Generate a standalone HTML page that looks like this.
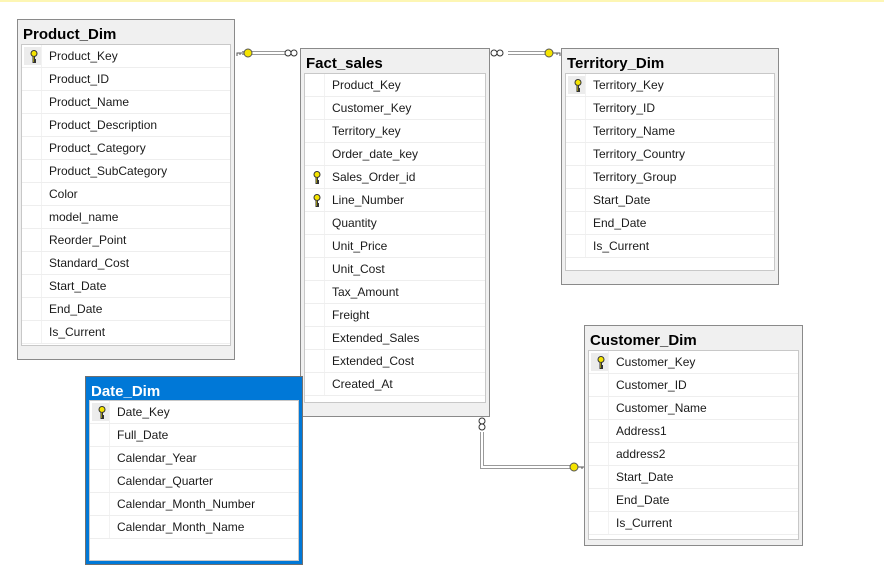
<!DOCTYPE html>
<html><head><meta charset="utf-8"><style>
body{margin:0;width:884px;height:573px;background:#fff;position:relative;overflow:hidden;font-family:"Liberation Sans",sans-serif}
.top{position:absolute;left:0;top:0;width:884px;height:2px;background:#fdf6b4}
.t{position:absolute;background:#f0f0f0;border:1px solid #8a8a8a;box-sizing:border-box}
.t h{position:absolute;left:5px;top:6px;font-size:15px;font-weight:bold;color:#000}
.in{position:absolute;left:3px;right:3px;background:#fff;border:1px solid #c8c8c8;box-sizing:border-box}
.r{height:23px;border-bottom:1px solid #eeeeee;box-sizing:border-box;position:relative;font-size:12px;line-height:22px;color:#1a1a1a}
.r span{position:absolute;left:27px}
.r:before{content:"";position:absolute;left:19px;top:0;bottom:0;border-left:1px solid #f2f2f2}
.k{position:absolute;left:2px;top:2px;width:17px;height:18px;background:#ececec}
.blue{background:#0078d7;border:1px solid #707070}
.blue h{color:#fff}
</style></head><body>
<div class="top"></div>
<svg width="884" height="573" style="position:absolute;left:0;top:0">
<defs><g id="key"><circle cx="0" cy="0" r="4" fill="#f5e400" stroke="#555" stroke-width="1"/><path d="M4 0h7v3M8 0v2" stroke="#555" fill="none"/></g></defs>
<g stroke="#9a9a9a" stroke-width="4" fill="none"><path d="M242 53H286"/><path d="M508 53H552"/><path d="M482 432V467H572"/></g>
<g stroke="#fff" stroke-width="2" fill="none"><path d="M242 53H286"/><path d="M508 53H552"/><path d="M482 432V467H572"/></g>
<g fill="#fff" stroke="#333"><circle cx="288" cy="53" r="3"/><circle cx="294" cy="53" r="3"/><circle cx="494" cy="53" r="3"/><circle cx="500" cy="53" r="3"/><circle cx="482" cy="421" r="3"/><circle cx="482" cy="427" r="3"/></g>
<use href="#key" transform="translate(248,53) scale(-1,1)"/>
<use href="#key" transform="translate(549,53)"/>
<use href="#key" transform="translate(574,467)"/>
</svg>

<div class="t" style="left:17px;top:19px;width:218px;height:341px"><h>Product_Dim</h>
<div class="in" style="top:24px;height:302px">
<div class="r"><div class="k"></div><span>Product_Key</span></div><div class="r"><span>Product_ID</span></div><div class="r"><span>Product_Name</span></div><div class="r"><span>Product_Description</span></div><div class="r"><span>Product_Category</span></div><div class="r"><span>Product_SubCategory</span></div><div class="r"><span>Color</span></div><div class="r"><span>model_name</span></div><div class="r"><span>Reorder_Point</span></div><div class="r"><span>Standard_Cost</span></div><div class="r"><span>Start_Date</span></div><div class="r"><span>End_Date</span></div><div class="r"><span>Is_Current</span></div>
</div></div>

<div class="t" style="left:300px;top:48px;width:190px;height:369px"><h>Fact_sales</h>
<div class="in" style="top:24px;height:330px">
<div class="r"><span>Product_Key</span></div><div class="r"><span>Customer_Key</span></div><div class="r"><span>Territory_key</span></div><div class="r"><span>Order_date_key</span></div><div class="r"><span>Sales_Order_id</span></div><div class="r"><span>Line_Number</span></div><div class="r"><span>Quantity</span></div><div class="r"><span>Unit_Price</span></div><div class="r"><span>Unit_Cost</span></div><div class="r"><span>Tax_Amount</span></div><div class="r"><span>Freight</span></div><div class="r"><span>Extended_Sales</span></div><div class="r"><span>Extended_Cost</span></div><div class="r"><span>Created_At</span></div>
</div></div>

<div class="t" style="left:561px;top:48px;width:218px;height:237px"><h>Territory_Dim</h>
<div class="in" style="top:24px;height:198px">
<div class="r"><div class="k"></div><span>Territory_Key</span></div><div class="r"><span>Territory_ID</span></div><div class="r"><span>Territory_Name</span></div><div class="r"><span>Territory_Country</span></div><div class="r"><span>Territory_Group</span></div><div class="r"><span>Start_Date</span></div><div class="r"><span>End_Date</span></div><div class="r"><span>Is_Current</span></div>
</div></div>

<div class="t" style="left:584px;top:325px;width:219px;height:221px"><h>Customer_Dim</h>
<div class="in" style="top:24px;height:190px">
<div class="r"><div class="k"></div><span>Customer_Key</span></div><div class="r"><span>Customer_ID</span></div><div class="r"><span>Customer_Name</span></div><div class="r"><span>Address1</span></div><div class="r"><span>address2</span></div><div class="r"><span>Start_Date</span></div><div class="r"><span>End_Date</span></div><div class="r"><span>Is_Current</span></div>
</div></div>

<div class="t blue" style="left:85px;top:376px;width:218px;height:189px"><h>Date_Dim</h>
<div class="in" style="top:23px;height:161px">
<div class="r"><div class="k"></div><span>Date_Key</span></div><div class="r"><span>Full_Date</span></div><div class="r"><span>Calendar_Year</span></div><div class="r"><span>Calendar_Quarter</span></div><div class="r"><span>Calendar_Month_Number</span></div><div class="r"><span>Calendar_Month_Name</span></div>
</div></div>

<svg width="884" height="573" style="position:absolute;left:0;top:0;pointer-events:none">
<defs><g id="kg"><circle cx="0" cy="-2.5" r="3" fill="#f5e400" stroke="#333"/><path d="M-1 0.5v6h2.5v-1h-1v-1h1v-1h-1v-3" fill="#f5e400" stroke="#333" stroke-width="1"/></g></defs>
<use href="#kg" transform="translate(34,56)"/>
<use href="#kg" transform="translate(317,177)"/>
<use href="#kg" transform="translate(317,200)"/>
<use href="#kg" transform="translate(578,85)"/>
<use href="#kg" transform="translate(601,362)"/>
<use href="#kg" transform="translate(102,412)"/>
</svg>
</body></html>
